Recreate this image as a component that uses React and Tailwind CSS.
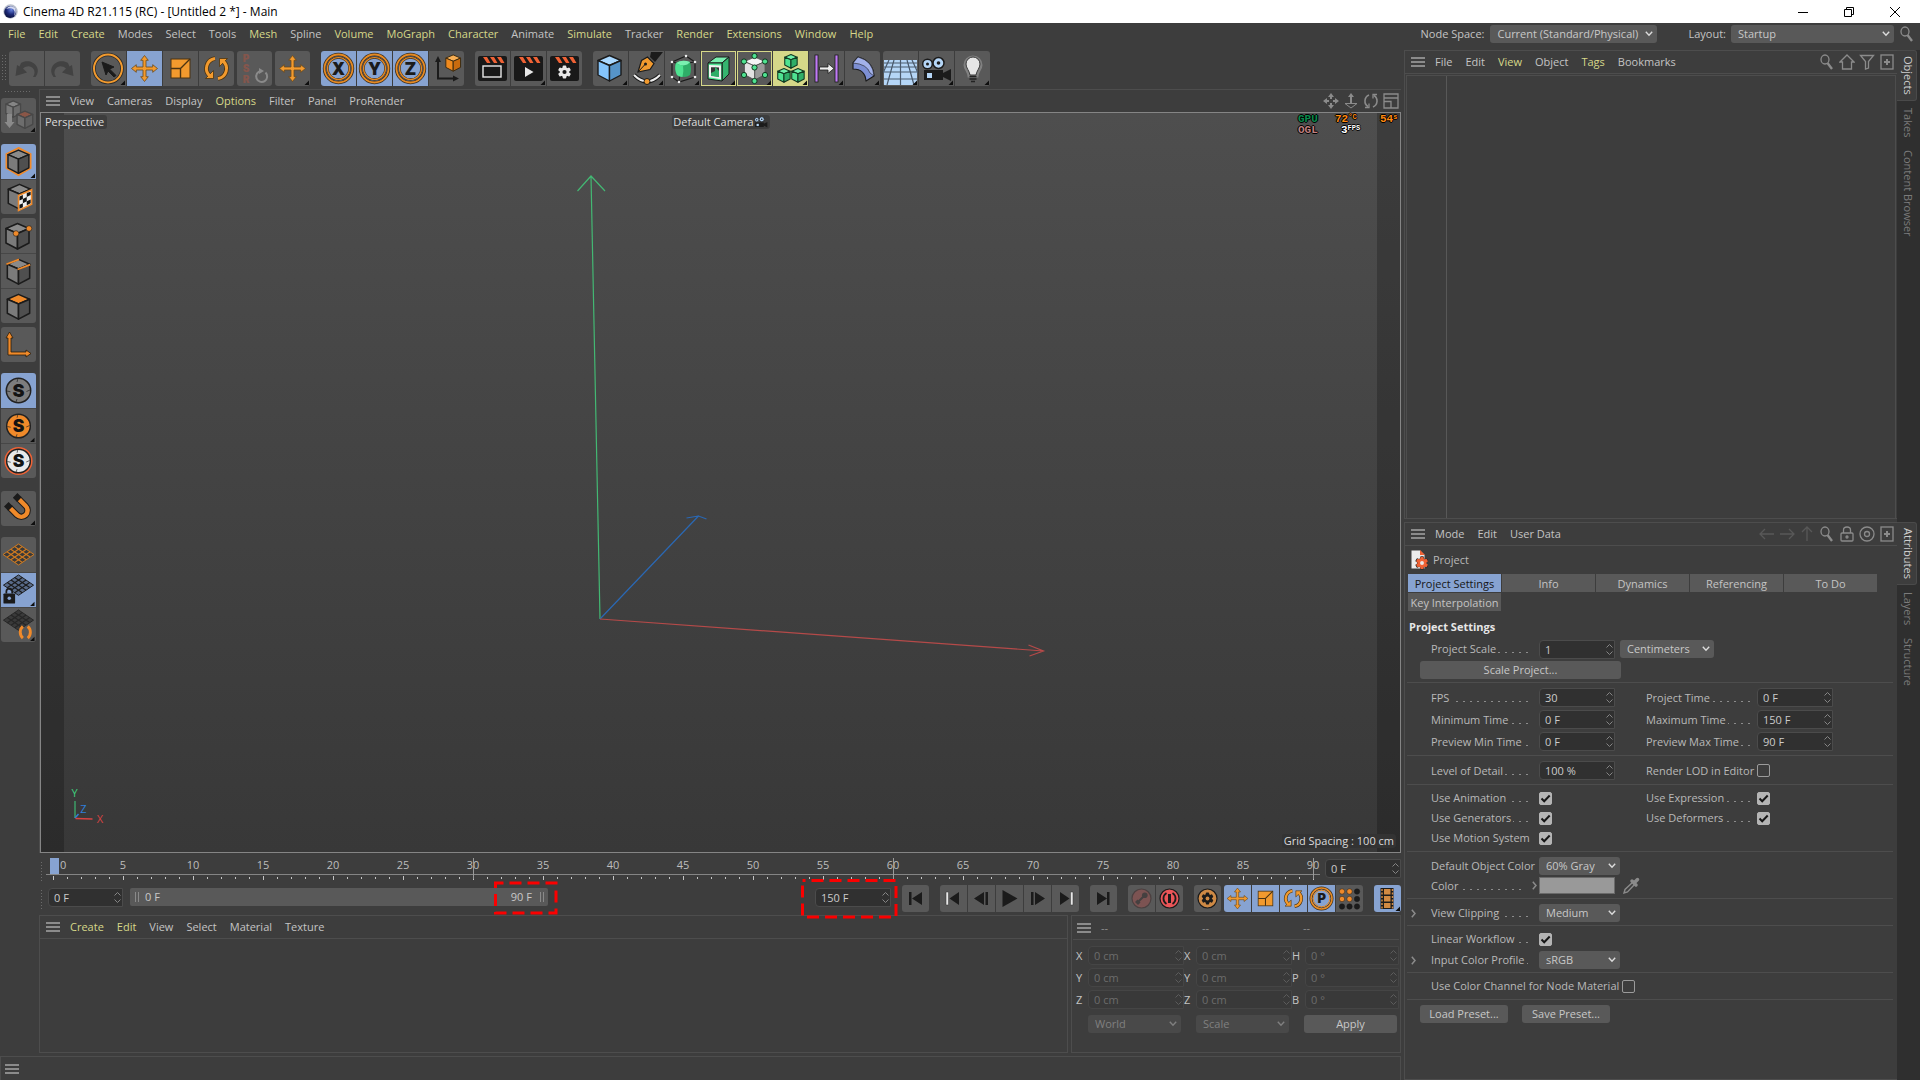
import React from "react";

const MAIN_MENU = [
  ["File", 1], ["Edit", 1], ["Create", 1], ["Modes", 0], ["Select", 0], ["Tools", 0], ["Mesh", 1], ["Spline", 0],
  ["Volume", 1], ["MoGraph", 1], ["Character", 1], ["Animate", 0], ["Simulate", 1], ["Tracker", 0], ["Render", 1],
  ["Extensions", 1], ["Window", 1], ["Help", 1],
];

const O = "#f29a2e";
const K = "#1b1b1b";

/* ---------- small parts ---------- */

function Menu({ items, className = "" }) {
  return (
    <nav className={"flex items-center gap-[13px] " + className}>
      {items.map(([t, hot]) => (
        <button key={t} className={hot ? "text-[#d6d889]" : "text-[#c4c4c4]"}>{t}</button>
      ))}
    </nav>
  );
}

function Burger() {
  return (
    <button aria-label="Panel menu" className="flex w-[14px] shrink-0 flex-col gap-0.5">
      <span className="h-0.5 bg-[#8b8b8b]" />
      <span className="h-0.5 bg-[#8b8b8b]" />
      <span className="h-0.5 bg-[#8b8b8b]" />
    </button>
  );
}

function Spin({ dim }) {
  return (
    <svg width="7" height="13" viewBox="0 0 7 13" fill="none" stroke={dim ? "#5c5c5c" : "#858585"} className="pointer-events-none absolute right-0.5 top-[3px]">
      <path d="M0.5 4.5 L3.5 1.5 L6.5 4.5 M0.5 8.5 L3.5 11.5 L6.5 8.5" />
    </svg>
  );
}

function Field({ value, id, label, dim, className = "" }) {
  return (
    <span className={"relative block h-[19px] " + className}>
      <input
        id={id}
        aria-label={label}
        defaultValue={value}
        disabled={dim}
        className={
          "block h-full w-full rounded-l-[4px] border pl-[5px] pr-3 leading-4 outline-none " +
          (dim ? "border-[#454545] bg-[#393939] text-[#6c6c6c]" : "border-[#4b4b4b] bg-[#303030] text-[#cbcbcb]")
        }
      />
      <Spin dim={dim} />
    </span>
  );
}

function Drop({ value, id, label, dim, className = "" }) {
  return (
    <span className={"relative block h-[18px] " + className}>
      <select
        id={id}
        aria-label={label}
        disabled={dim}
        className={
          "block h-full w-full appearance-none rounded-[3px] pl-[7px] pr-4 leading-4 opacity-100 outline-none " +
          (dim ? "bg-[#494949] text-[#808080]" : "bg-[#595959] text-[#c8c8c8]")
        }
      >
        <option>{value}</option>
      </select>
      <svg width="8" height="6" viewBox="0 0 8 6" fill="none" stroke={dim ? "#808080" : "#dcdcdc"} strokeWidth="1.4" className="pointer-events-none absolute right-1 top-1.5">
        <path d="M0.8 0.8 L4 4.2 L7.2 0.8" />
      </svg>
    </span>
  );
}

function Check({ id, on }) {
  return (
    <span className="relative block size-[13px]">
      <input id={id} type="checkbox" defaultChecked={on} className="block size-[13px] appearance-none rounded-[2px] border border-[#9b9b9b] checked:border-[#b4b4b4] checked:bg-[#b4b4b4]" />
      {on && (
        <svg width="13" height="13" viewBox="0 0 13 13" fill="none" stroke="#161616" strokeWidth="2" className="pointer-events-none absolute inset-0">
          <path d="M2.5 6.5 L5.2 9.2 L10.7 3.5" />
        </svg>
      )}
    </span>
  );
}

function Label({ id, children, className = "" }) {
  return (
    <label htmlFor={id} className={"flex shrink-0 items-baseline gap-0.5 whitespace-nowrap " + className}>
      {children}
      <span className="h-px min-w-0 flex-1 bg-[repeating-linear-gradient(to_left,#8c8c8c_0_2px,transparent_2px_7px)]" />
    </label>
  );
}

function Btn({ children, className = "" }) {
  return <button className={"h-[18px] rounded-[3px] bg-[#595959] leading-[18px] text-[#c8c8c8] " + className}>{children}</button>;
}

/* ---------- icons ---------- */

function Corner() {
  return <path d="M34 29.5 V34 H29.5 Z" fill="#0e0e0e" />;
}

function Ico({ children, corner }) {
  return (
    <svg viewBox="0 0 35 35" className="block size-full" fill="none">
      {children}
      {corner && <Corner />}
    </svg>
  );
}

function Cube({ t, l, r, s = K, w = 1.4, transform }) {
  return (
    <g stroke={s} strokeWidth={w} strokeLinejoin="round" transform={transform}>
      <path d="M17.5 4.5 L29 9.5 L17.5 14.5 L6 9.5 Z" fill={t} />
      <path d="M6 9.5 L17.5 14.5 V30 L6 24 Z" fill={l} />
      <path d="M29 9.5 L17.5 14.5 V30 L29 24 Z" fill={r} />
    </g>
  );
}

function GrayCube({ transform }) {
  return <Cube t="#8a8a8a" l="#7b7b7b" r="#4f4f4f" w={1.6} transform={transform} />;
}

const MOVE_PATH =
  "M17.5 4.5 L21.3 9.3 H19 V16 H25.7 V13.7 L30.5 17.5 L25.7 21.3 V19 H19 V25.7 H21.3 L17.5 30.5 L13.7 25.7 H16 V19 H9.3 V21.3 L4.5 17.5 L9.3 13.7 V16 H16 V9.3 H13.7 Z";

function MoveIcon() {
  return <path d={MOVE_PATH} fill={O} stroke="#6b4a1c" strokeWidth="0.8" />;
}

function ScaleIcon() {
  return (
    <g>
      <rect x="8" y="8" width="19" height="19" fill={O} stroke="#4a3312" strokeWidth="1" />
      <path d="M8 17.5 H17.5 V27 M17.5 17.5 L27 8" stroke="#4a3312" strokeWidth="1.4" />
    </g>
  );
}

function RotateIcon() {
  return (
    <g>
      <path d="M16 7.5 A10 10 0 0 0 11 25 M19 27.5 A10 10 0 0 0 24 10" stroke="#4a3312" strokeWidth="4.6" />
      <path d="M6.5 27.5 H14.5 V19.5 Z M28.5 7.5 H20.5 V15.5 Z" fill={O} stroke="#4a3312" strokeWidth="0.8" />
      <path d="M16 7.5 A10 10 0 0 0 11 25 M19 27.5 A10 10 0 0 0 24 10" stroke={O} strokeWidth="3" />
    </g>
  );
}

function AxisLetter({ ch }) {
  return (
    <g>
      <circle cx="17.5" cy="17.5" r="14" stroke="#3a3024" strokeWidth="3.4" />
      <circle cx="17.5" cy="17.5" r="14" stroke="#e58a24" strokeWidth="1.8" />
      <circle cx="17.5" cy="17.5" r="11" stroke="#3a3024" strokeWidth="2.4" />
      <circle cx="17.5" cy="17.5" r="11" stroke="#e58a24" strokeWidth="1.2" />
      <text x="17.5" y="23.5" textAnchor="middle" fill={K} fontSize="17" fontWeight="900" fontFamily="Inter, sans-serif">{ch}</text>
    </g>
  );
}

function Clap({ children }) {
  return (
    <g>
      <rect x="3" y="5" width="29" height="25" rx="2" fill="#191919" />
      <path d="M8 6 H12 L15.5 12 H12 Z M15 6 H19 L22.5 12 H19 Z M22 6 H26 L29.5 12 H26 Z" fill="#ef6235" />
      {children}
    </g>
  );
}

function Gear({ cx, cy, r, fill, hole }) {
  return (
    <g>
      {[0, 60, 120].map((a) => (
        <rect key={a} x={cx - r * 0.28} y={cy - r} width={r * 0.56} height={r * 2} rx={r * 0.15} fill={fill} transform={`rotate(${a} ${cx} ${cy})`} />
      ))}
      <circle cx={cx} cy={cy} r={r * 0.74} fill={fill} />
      <circle cx={cx} cy={cy} r={r * 0.32} fill={hole} />
    </g>
  );
}

const GREEN = { t: "#6ff0aa", l: "#4fe391", r: "#2fae68" };

const UNDO = "M12 12 C17 8.5 25 10 28 16 C29.5 19 29 23 26.5 26 L24 26 C26 23 26 20 24.5 18 C22 14.5 17.5 14.5 14 17.5 L18 21.5 L6.5 25 L8 14 L10.5 15.5 Z";

const TOOL = {
  undo: <path d={UNDO} fill="#424242" />,
  redo: <path d={UNDO} transform="matrix(-1 0 0 1 35 0)" fill="#424242" />,
  select: (
    <g>
      <circle cx="17" cy="17.5" r="14" stroke="#2b2b2b" strokeWidth="3.6" />
      <circle cx="17" cy="17.5" r="14" stroke={O} strokeWidth="2" />
      <path d="M11 11 L23 16 L18.5 18 L25 24.5 L23 26 L17 20 L15 24 Z" fill={K} stroke={K} />
    </g>
  ),
  move: <MoveIcon />,
  scale: <ScaleIcon />,
  rotate: <RotateIcon />,
  psr: (
    <g>
      <g fill="#85564c" fontSize="10" fontWeight="900" fontFamily="Inter, sans-serif" textAnchor="middle">
        <text x="9" y="10.5">P</text>
        <text x="9" y="21">S</text>
        <text x="9" y="31.5">R</text>
      </g>
      <path d="M24 20 A5.5 5.5 0 1 0 28.5 21.5" stroke="#8a8a8a" strokeWidth="2" />
      <path d="M22 17 L27 20 L22 23 Z" fill="#8a8a8a" />
    </g>
  ),
  x: <AxisLetter ch="X" />,
  y: <AxisLetter ch="Y" />,
  z: <AxisLetter ch="Z" />,
  coord: (
    <g>
      <path d="M9 9 V27.5 H27" stroke={K} strokeWidth="2" />
      <path d="M9 5 L12 11 H6 Z M30 27.5 L24 24.5 V30.5 Z" fill={K} />
      <Cube t="#f7ae54" l="#f08a1e" r="#c96b0e" s="#3b2a10" w={1.5} transform="translate(13 1) scale(0.64)" />
    </g>
  ),
  view: <Clap><rect x="8" y="15" width="18" height="11" stroke="#e8e8e8" strokeWidth="1.4" /></Clap>,
  viewer: <Clap><path d="M14 16 L22.5 21 L14 26 Z" fill="#e8e8e8" /></Clap>,
  settings: <Clap><Gear cx={17.5} cy={21} r={6.5} fill="#e8e8e8" hole="#191919" /></Clap>,
  cube: <Cube t="#a9d8ff" l="#84c4fb" r="#5694c9" transform="translate(-1 0)" />,
  pen: (
    <g>
      <path d="M22 1 H34 L26 11 L21 6 Z" fill={K} />
      <path d="M9 21 L12.5 9.5 L18.5 6 L25 12.5 L21 18.5 Z" fill={O} stroke={K} strokeWidth="1.2" />
      <path d="M9 21 L16 13.5" stroke={K} />
      <circle cx="16.5" cy="13" r="1.5" fill={K} />
      <path d="M5 24 Q18 37 31 24" stroke={K} strokeWidth="4" />
      <path d="M5 24 Q18 37 31 24" stroke="#eee" strokeWidth="2" />
      <circle cx="18" cy="30.5" r="3" fill={O} stroke={K} />
    </g>
  ),
  subdiv: (
    <g>
      <path d="M7 11 L21 5 L30 11 V26 L14 31 L7 26 Z M7 11 L16 13 L30 11 M16 13 L14 31" stroke={K} strokeWidth="1.2" />
      <path d="M11 12 Q17 8 25 11 Q27 18 25 24 Q20 28 12 24 Q9 18 11 12 Z" fill="#2fae68" />
      <path d="M11 12 Q17 8 25 11 Q23 14 18 14.5 Q14 14 11 12 Z" fill="#7af0b0" />
      <path d="M11 12 Q14 14 18 14.5 Q19 20 17.5 26 Q14 26 12 24 Q9 18 11 12 Z" fill="#4fe391" />
      {[[7, 11], [21, 5], [30, 11], [30, 26], [14, 31], [7, 26]].map(([a, b]) => <circle key={a + "-" + b} cx={a} cy={b} r="1.3" fill="#eee" />)}
    </g>
  ),
  boole: (
    <g stroke={K} strokeWidth="1">
      <path d="M7 12 L15 6 H28 L21 12 Z" fill="#7af0b0" />
      <path d="M21 12 L28 6 V23 L21 30 Z" fill="#35b56f" />
      <path d="M7 12 H21 V30 L7 28 Z" fill="#4fe391" />
      <path d="M9 15 L19 15.5 V27 L9 25.5 Z" fill="#353535" stroke="#f2f2f2" strokeWidth="2" />
      <path d="M14 15.5 L18 20 V26 L10 25 V22 L14 20 Z" fill="#2fae68" stroke="none" />
    </g>
  ),
  cloner: (
    <g>
      <Cube t="#f4f4f4" l="#e2e2e2" r="#9a9a9a" s="#555" w={1} transform="translate(2 2) scale(0.9)" />
      {[[17.5, 5], [7, 10.5], [28, 10.5], [17.5, 16.5], [7, 24], [28, 24], [17.5, 30]].map(([a, b]) => (
        <circle key={a + "-" + b} cx={a} cy={b} r="2.6" fill="#4fe391" stroke="#12381f" strokeWidth="1" />
      ))}
    </g>
  ),
  cubes: (
    <g>
      <Cube {...GREEN} s="#123a22" w={2} transform="translate(8.5 1) scale(0.54)" />
      <Cube {...GREEN} s="#123a22" w={2} transform="translate(1.5 15) scale(0.54)" />
      <Cube {...GREEN} s="#123a22" w={2} transform="translate(15.5 15) scale(0.54)" />
    </g>
  ),
  field: (
    <g>
      <rect x="6" y="4" width="3" height="27" fill="#c07bf5" stroke={K} strokeWidth="0.8" />
      <rect x="26" y="4" width="3" height="27" fill="#c07bf5" stroke={K} strokeWidth="0.8" />
      <path d="M10.5 16 H19 V12.5 L25 17.5 L19 22.5 V19 H10.5 Z" fill="#f0f0f0" stroke={K} strokeWidth="0.8" />
    </g>
  ),
  bend: (
    <g stroke={K} strokeWidth="1.2" strokeLinejoin="round">
      <path d="M8 12 L13 6 Q28 10 29 25 L21 30 Q20 18 8 18 Z" fill="#7d8fd4" />
      <path d="M8 12 L13 6 Q28 10 29 25 L25 22 Q22 13 8 12 Z" fill="#a3b1ea" strokeWidth="0.6" />
    </g>
  ),
  floor: (
    <g>
      <path d="M1 9 H34 V34 H1 Z" fill="#b5d6f7" />
      <path d="M1 12 H34 M1 16 H34 M1 21 H34 M1 28 H34 M17.5 9 V34 M11 9 L4 34 M24 9 L31 34 M6 9 L0 22 M29 9 L35 22" stroke="#4a5a6c" strokeWidth="1.2" />
    </g>
  ),
  camera: (
    <g>
      <circle cx="8.5" cy="13" r="4.8" fill="#b5d6f7" stroke={K} strokeWidth="1.5" />
      <circle cx="19.5" cy="12" r="5.5" fill="#b5d6f7" stroke={K} strokeWidth="1.5" />
      <circle cx="8.5" cy="13" r="1.5" fill={K} />
      <circle cx="19.5" cy="12" r="1.8" fill={K} />
      <path d="M5 19 H24 V22 L32 18 V30 L24 26 V29 H5 Z" fill={K} />
      <rect x="8" y="22" width="5" height="5" fill="#b5d6f7" />
    </g>
  ),
  light: (
    <g>
      <path d="M10 14 A8 8 0 0 1 26 14 C26 18 22.5 20 22 25 H14 C13.5 20 10 18 10 14 Z" fill="#d8d8d8" opacity="0.3" stroke="#ddd" strokeWidth="3" />
      <path d="M11 13 A7 7 0 0 1 25 13 C25 17 21.5 20 21 24 H15 C14.5 20 11 17 11 13 Z" fill="#e6e6e6" stroke="#3a3a3a" />
      <path d="M14.5 25.5 H21.5 M14.5 28 H21.5 M16 30.5 H20" stroke="#222" strokeWidth="1.5" />
    </g>
  ),
};

function Lattice({ color }) {
  return (
    <g stroke={color}>
      <path d="M17.5 7 L33 17.5 L17.5 28 L2 17.5 Z" fill="#000" fillOpacity="0.35" strokeWidth="1" />
      <path d="M13.6 9.6 L29 20 M9.8 12.2 L25.3 22.7 M6 14.8 L21.4 25.4 M21.4 9.6 L6 20.2 M25.3 12.2 L9.8 22.7 M29 14.8 L13.6 25.4" strokeWidth="1.2" />
    </g>
  );
}

const SIDE = {
  editable: (
    <g>
      <Cube t="#858585" l="#7a7a7a" r="#6c6c6c" s="#484848" w={2} transform="translate(1 0) scale(0.64)" />
      <Cube t="#8a5647" l="#6d6d6d" r="#606060" s="#484848" w={2} transform="translate(12 10) scale(0.68)" />
      <path d="M6 16 H11 V24 H13.5 L8.5 30 L3.5 24 H6 Z" fill="#8a8a8a" />
    </g>
  ),
  model: (
    <g>
      <path d="M17.5 4 L29.5 10 V24 L17.5 31 L5.5 24 V10 Z" stroke="#f08a2a" strokeWidth="2" />
      <GrayCube transform="translate(1.5 2) scale(0.91)" />
    </g>
  ),
  texture: (
    <g>
      <GrayCube transform="translate(1 0)" />
      <path d="M17.5 16 L31 10 V25 L17.5 31.5 Z" fill="#eee" stroke="#f08a2a" strokeWidth="1.6" />
      <path d="M18.5 17 L22 15.5 V19.5 L18.5 21 Z M26 13.5 L30 12 V15.5 L26 17.5 Z M22 19.5 L26 17.5 V22 L22 24 Z M18.5 25.5 L22 24 V28 L18.5 29.5 Z M26 22 L30 20 V24 L26 26 Z" fill="#141414" />
    </g>
  ),
  points: (
    <g>
      <GrayCube transform="translate(-1 1)" />
      <circle cx="15" cy="15.5" r="2.8" fill="#f08a2a" stroke={K} strokeWidth="0.6" />
      <circle cx="28" cy="10.5" r="2.8" fill="#f08a2a" stroke={K} strokeWidth="0.6" />
    </g>
  ),
  edges: (
    <g>
      <GrayCube transform="translate(0 1)" />
      <path d="M5 10.5 L18 5.5 M16.5 16 L29.5 11" stroke="#f08a2a" strokeWidth="1.8" />
    </g>
  ),
  polys: <Cube t="#f08a2a" l="#7b7b7b" r="#4f4f4f" w={1.6} transform="translate(0 1)" />,
  axis: (
    <g stroke="#2a1c0a" strokeWidth="0.8">
      <path d="M8.5 5 L12 11 H10 V25 H25 V23 L30 26.5 L25 30 V28 H7 V11 H5 Z" fill="#f08a2a" />
    </g>
  ),
};

function SIcon({ fill, ring }) {
  return (
    <g>
      {ring && <circle cx="17.5" cy="17.5" r="13.5" stroke="#ef6235" strokeWidth="2" />}
      <circle cx="17.5" cy="17.5" r="12.2" fill={fill} stroke="#222" strokeWidth="1.5" />
      <path d="M17 5.5 L16 9 M6 18 L9.5 18.8 M29 17 L25.5 18.5 M15 29 L16 26" stroke="#222" strokeWidth="0.7" />
      <text x="17.5" y="24" textAnchor="middle" fill="#131313" fontSize="18" fontWeight="900" fontFamily="Inter, sans-serif">S</text>
    </g>
  );
}

const MAGNET = (
  <g transform="translate(17.5 18) rotate(-45)">
    <path d="M-8 -7 H-2.5 V3 A3.5 3.5 0 0 0 4.5 3 V-7 H10 V3 A9 9 0 0 1 -8 3 Z" fill="#f08a2a" stroke={K} strokeWidth="1" />
    <path d="M-8.5 -12 H-2 V-6 H-8.5 Z M4 -12 H10.5 V-6 H4 Z" fill={K} />
  </g>
);

const WORKPLANE_LOCK = (
  <g>
    <g transform="translate(0 -5)"><Lattice color="#1a1a1a" /></g>
    <path d="M5 21 V19 A3 3 0 0 1 11 19 V21" stroke={K} strokeWidth="1.8" />
    <rect x="2" y="21" width="12" height="10.5" rx="1" fill={K} />
    <circle cx="8" cy="26" r="1.8" fill="#87a3d1" />
  </g>
);

const WORKPLANE_ROT = (
  <g>
    <g transform="translate(0 -5)"><Lattice color="#262626" /></g>
    <path d="M22 19 A8 8 0 0 0 22 31 M27 31 A8 8 0 0 0 27 19" stroke="#f08a2a" strokeWidth="3" />
  </g>
);

const TOOL_GROUPS = [
  ["", [["undo"], ["redo"]]],
  ["ml-[11px]", [["select", "", 1], ["move", "on"], ["scale"], ["rotate"]]],
  ["ml-[3px]", [["psr"]]],
  ["ml-[3px]", [["move", "", 1]]],
  ["ml-[11px]", [["x", "on"], ["y", "on"], ["z", "on"], ["coord"]]],
  ["ml-[11px]", [["view"], ["viewer", "", 1], ["settings"]]],
  ["ml-[11px]", [["cube", "", 1], ["pen", "", 1], ["subdiv", "", 1], ["boole", "ring", 1], ["cloner", "ring", 1], ["cubes", "hot", 1], ["field", "", 1], ["bend", "", 1]]],
  ["ml-[3px]", [["floor", "", 1], ["camera", "", 1], ["light", "", 1]]],
];

const TONE = {
  "": "bg-[#595959]",
  on: "bg-[#87a3d1]",
  hot: "bg-[#d6d889]",
  ring: "bg-[#595959] outline-1 -outline-offset-1 outline-[#d6d889]",
};

function Toolbar() {
  return (
    <div className="flex h-[43px] shrink-0 items-start pl-px pt-[5px]">
      <span className="mr-[3px] mt-[3px] h-7 w-[5px] bg-[radial-gradient(#8a8a8a_1px,transparent_1px)] bg-[size:3px_3px] opacity-60" />
      {TOOL_GROUPS.map(([gap, items], i) => (
        <div key={i} className={"flex gap-px overflow-hidden rounded-[3px] " + gap}>
          {items.map(([name, tone = "", corner], j) => (
            <button key={j} aria-label={name} className={"block size-[35px] " + TONE[tone]}>
              <Ico corner={corner}>{TOOL[name]}</Ico>
            </button>
          ))}
        </div>
      ))}
    </div>
  );
}

const PALETTE = [
  ["mt-1", [["Make Editable", SIDE.editable, "", 1]]],
  ["mt-[11px]", [["Model", SIDE.model, "on", 1], ["Texture", SIDE.texture]]],
  ["mt-1", [["Points", SIDE.points], ["Edges", SIDE.edges], ["Polygons", SIDE.polys]]],
  ["mt-1", [["Axis", SIDE.axis]]],
  ["mt-[11px]", [["Viewport Solo Off", <SIcon fill="#7d7d7d" />, "on"], ["Viewport Solo Single", <SIcon fill="#f08a2a" />, "", 1], ["Viewport Solo Hierarchy", <SIcon fill="#e9e9e9" ring />]]],
  ["mt-[13px]", [["Snap", MAGNET, "", 1]]],
  ["mt-[11px]", [["Workplane", <Lattice color="#cf7a20" />], ["Lock Workplane", WORKPLANE_LOCK, "on", 1], ["Rotate Workplane", WORKPLANE_ROT, "", 1]]],
];

function Palette() {
  return (
    <aside className="flex w-[39px] shrink-0 flex-col items-start pl-px pt-px">
      <span className="ml-[3px] h-1 w-7 bg-[radial-gradient(#8a8a8a_1px,transparent_1px)] bg-[size:3px_3px] opacity-60" />
      {PALETTE.map(([gap, items], i) => (
        <div key={i} className={"overflow-hidden rounded-[3px] " + gap}>
          {items.map(([name, icon, tone = "", corner], j) => (
            <button key={name} aria-label={name} className={"block size-[35px] " + TONE[tone] + (j ? " border-t border-[#474747]" : "")}>
              <Ico corner={corner}>{icon}</Ico>
            </button>
          ))}
        </div>
      ))}
    </aside>
  );
}

/* ---------- viewport ---------- */

function Viewport() {
  return (
    <section className="flex min-h-0 flex-1 flex-col border-l border-t border-[#4d4d4d]">
      <div className="flex h-[22px] shrink-0 items-center pl-[6px] pr-0.5">
        <Burger />
        <Menu className="ml-2.5" items={[["View"], ["Cameras"], ["Display"], ["Options", 1], ["Filter"], ["Panel"], ["ProRender"]]} />
        <div className="ml-auto flex items-center gap-1">
          <button aria-label="Pan">
            <svg width="16" height="16" viewBox="0 0 16 16" fill="#8b8b8b"><path d="M8 0 L11 4 H9 V6 H7 V4 H5 Z M8 16 L5 12 H7 V10 H9 V12 H11 Z M0 8 L4 5 V7 H6 V9 H4 V11 Z M16 8 L12 11 V9 H10 V7 H12 V5 Z" /></svg>
          </button>
          <button aria-label="Dolly">
            <svg width="16" height="16" viewBox="0 0 16 16" fill="none" stroke="#8b8b8b"><path d="M8 0 L11 4 H9 V10 H7 V4 H5 Z" fill="#8b8b8b" stroke="none" /><path d="M2 10.5 H14 L8 15 Z" /></svg>
          </button>
          <button aria-label="Orbit">
            <svg width="16" height="16" viewBox="0 0 16 16" fill="none" stroke="#8b8b8b" strokeWidth="1.6"><path d="M6 2 A6.5 6.5 0 0 0 5 13.5 M10 14 A6.5 6.5 0 0 0 11 2.5" /><path d="M2 14.5 H6 V10.5 M14 1.5 H10 V5.5" strokeWidth="1.3" /></svg>
          </button>
          <button aria-label="Toggle view">
            <svg width="16" height="16" viewBox="0 0 16 16" fill="none" stroke="#8b8b8b" strokeWidth="1.3"><path d="M1 1 H15 V15 H1 Z M1 5 H15 M1 8.5 H8 V15" /></svg>
          </button>
        </div>
      </div>
      <div className="relative min-h-0 flex-1 border border-[#858585] bg-linear-to-b from-[#4e4e4e] to-[#383838]">
        <div className="absolute inset-y-0 left-0 w-[23px] bg-black/22" />
        <div className="absolute inset-y-0 right-0 w-[23px] bg-black/22" />
        <svg viewBox="41 113 1358 739" className="absolute inset-0 size-full" fill="none">
          <path d="M599.5 619 L590.5 176 M577 191 L590.5 176 L604.5 191" stroke="#43b873" strokeWidth="1.2" />
          <path d="M599.5 619 L698 516 M686 518 L698 516 L706 519" stroke="#2a68b4" strokeWidth="1.2" />
          <path d="M599.5 619 L1043 651 M1028 645 L1043 651 L1029 656" stroke="#b54a49" strokeWidth="1.2" />
          <path d="M74.5 801 V818" stroke="#3fd07c" />
          <path d="M74.5 818 L78 814" stroke="#2f7fd8" strokeWidth="1.5" />
          <path d="M75 818.5 L92 819" stroke="#d84343" strokeWidth="1.5" />
          <g fontSize="11" fontFamily="Open Sans, sans-serif" textAnchor="middle">
            <text x="74" y="797" fill="#3fd07c">Y</text>
            <text x="83" y="813" fill="#2f7fd8">Z</text>
            <text x="99.5" y="823" fill="#d84343">X</text>
          </g>
        </svg>
        <div className="absolute left-px top-0.5 rounded-[3px] bg-[#3d3d3d] px-[3px] leading-[14px] text-[#dcdcdc]">Perspective</div>
        <div className="absolute left-1/2 top-0.5 flex -translate-x-1/2 items-center rounded-[3px] bg-[#3d3d3d] px-0.5 leading-[14px] text-[#dcdcdc]">
          Default Camera
          <svg width="14" height="12" viewBox="2 5 31 26" fill="none">{TOOL.camera}</svg>
        </div>
        <div className="absolute right-0 top-px grid grid-cols-[37px_45px_20px] font-['Liberation_Mono',monospace] text-[11px] font-bold leading-[11px] [text-shadow:1px_0_#000,-1px_0_#000,0_1px_#000,0_-1px_#000]">
          <span className="text-[#0a8a4c]">GPU</span>
          <span className="text-[#ff8a10]">72<sup className="text-[7px] leading-none">°C</sup></span>
          <span className="text-[#ff8a10]">54<sup className="text-[7px] leading-none">s</sup></span>
          <span className="text-[#c08080]">OGL</span>
          <span className="pl-[6px] text-white">3<sup className="text-[7px] leading-none">FPS</sup></span>
        </div>
        <div className="absolute bottom-1 right-1 rounded-[3px] bg-[#333333] px-0.5 leading-[14px] text-[#dcdcdc]">Grid Spacing : 100 cm</div>
      </div>
    </section>
  );
}

/* ---------- timeline ---------- */

function Ruler() {
  return (
    <div className="flex h-[31px] shrink-0 pt-[5px]">
      <span className="ml-px mt-[3px] h-5 w-1 bg-[radial-gradient(#8a8a8a_1px,transparent_1px)] bg-[size:3px_3px] opacity-60" />
      <div className="ml-0.5 flex flex-1">
        {Array.from({ length: 91 }, (_, f) => {
          const big = f % 5 === 0;
          const long = f > 0 && f % 30 === 0;
          return (
            <div key={f} className="relative flex min-w-0 flex-1 flex-col items-center">
              <div className="flex h-4 w-full justify-center">
                {f === 0 && <span className="absolute left-1 top-0 h-4 w-[9px] bg-[#87a3d1]" />}
                {big && <span className={"text-center leading-[14px] text-[#bdbdbd]" + (f === 0 ? " absolute left-[14px]" : "")}>{f}</span>}
              </div>
              <span className="h-px w-full bg-[#858585]" />
              <span className={big ? "mt-px h-1 w-px bg-[#c4c4c4]" : "mt-0.5 h-0.5 w-px bg-[#c4c4c4]"} />
              {long && <span className="absolute top-0 h-[21px] w-px bg-[#9a9a9a]" />}
            </div>
          );
        })}
      </div>
      <Field value="0 F" label="Current frame" className="ml-[5px] mt-px w-[76px]" />
    </div>
  );
}

function PB({ name, on, children, corner }) {
  return (
    <button aria-label={name} className={"block size-[27px] " + (on ? "bg-[#87a3d1]" : "bg-[#595959]")}>
      <svg viewBox="0 0 27 27" className="block size-full" fill="none">
        {children}
        {corner && <path d="M26 21.5 V26 H21.5 Z" fill="#0e0e0e" />}
      </svg>
    </button>
  );
}

function Group({ className = "", children }) {
  return <div className={"flex shrink-0 gap-px self-start overflow-hidden rounded-[3px] " + className}>{children}</div>;
}

function Transport() {
  return (
    <div className="flex h-[31px] shrink-0 pt-px">
      <span className="ml-px mt-1 h-5 w-1 bg-[radial-gradient(#8a8a8a_1px,transparent_1px)] bg-[size:3px_3px] opacity-60" />
      <Field value="0 F" label="Start frame" className="ml-1 mt-[3px] w-[75px]" />
      <div className="ml-[7px] mt-[3px] flex flex-1">
        <div className="relative flex h-[18px] w-[61%] items-center rounded-[2px] bg-[#595959] pl-[5px] pr-1 text-[#c8c8c8]">
          <span className="h-[10px] w-1 border-x border-[#8a8a8a]" />
          <span className="ml-[6px]">0 F</span>
          <span className="ml-auto mr-2">90 F</span>
          <span className="h-[10px] w-1 border-x border-[#8a8a8a]" />
          <svg width="64" height="34" viewBox="0 0 64 34" fill="none" className="pointer-events-none absolute -right-2.5 -top-[7px]">
            <path d="M1.5 2 H62 V32 H1.5 Z" stroke="#fb0000" strokeWidth="3" strokeDasharray="12 6" strokeDashoffset="4" />
          </svg>
        </div>
      </div>
      <div className="relative mr-[11px] mt-[3px] w-[76px]">
        <Field value="150 F" label="End frame" />
        <svg width="97" height="40" viewBox="0 0 97 40" fill="none" className="pointer-events-none absolute -left-[14px] -top-[9px]">
          <path d="M1.5 1.5 H95 V38 H1.5 Z" stroke="#fb0000" strokeWidth="3" strokeDasharray="12 6" strokeDashoffset="9" />
        </svg>
      </div>
      <Group>
        <PB name="Go to start"><path d="M7 7 H9.5 V20 H7 Z M20 7 V20 L10 13.5 Z" fill={K} /></PB>
      </Group>
      <Group className="ml-[11px]">
        <PB name="Previous key"><path d="M6 7 H8.5 V20 H6 Z" fill="#e8e8e8" stroke="#333" strokeWidth="0.5" /><path d="M19 7 V20 L9.5 13.5 Z" fill={K} /></PB>
        <PB name="Previous frame"><path d="M16 7 V20 L6 13.5 Z M17.5 7 H20 V20 H17.5 Z" fill={K} /></PB>
        <PB name="Play"><path d="M6.5 5 V22 L21.5 13.5 Z" fill={K} /></PB>
        <PB name="Next frame"><path d="M11 7 V20 L21 13.5 Z M7 7 H9.5 V20 H7 Z" fill={K} /></PB>
        <PB name="Next key"><path d="M8 7 V20 L17.5 13.5 Z" fill={K} /><path d="M18.5 7 H21 V20 H18.5 Z" fill="#e8e8e8" stroke="#333" strokeWidth="0.5" /></PB>
      </Group>
      <Group className="ml-[11px]">
        <PB name="Go to end"><path d="M7 7 V20 L17 13.5 Z M17 7 H19.5 V20 H17 Z" fill={K} /></PB>
      </Group>
      <Group className="ml-[11px]">
        <PB name="Record">
          <circle cx="13.5" cy="13.5" r="9.5" fill="#7c5352" stroke="#4b4040" strokeWidth="1.2" />
          <path d="M10 17 L16 11" stroke="#454040" strokeWidth="2" />
          <circle cx="16.8" cy="10.2" r="2.8" fill="#454040" />
          <path d="M9.5 14.5 L12.5 17.5 L10 20 L7 17 Z" fill="#454040" />
        </PB>
        <PB name="Autokey">
          <circle cx="13.5" cy="13.5" r="9.5" fill="#ea5558" stroke={K} strokeWidth="1.2" />
          <path d="M10.5 8 A6.5 6.5 0 0 0 10.5 19 M16.5 19 A6.5 6.5 0 0 0 16.5 8" stroke={K} strokeWidth="1.8" />
          <path d="M13.5 9 V18" stroke={K} strokeWidth="3" />
        </PB>
      </Group>
      <Group className="ml-[11px]">
        <PB name="Keyframe options"><circle cx="13.5" cy="13.5" r="9.5" fill="#cf8a45" stroke={K} strokeWidth="1.2" /><Gear cx={13.5} cy={13.5} r={6} fill={K} hole="#cf8a45" /></PB>
      </Group>
      <Group className="ml-[3px]">
        <PB name="Position" on><g transform="translate(-0.5 -0.5) scale(0.8)"><MoveIcon /></g></PB>
        <PB name="Scale" on><g transform="scale(0.771)"><ScaleIcon /></g></PB>
        <PB name="Rotation" on><g transform="scale(0.771)"><RotateIcon /></g></PB>
        <PB name="Parameter" on>
          <circle cx="13.5" cy="13.5" r="10.5" stroke="#3a3024" strokeWidth="3" />
          <circle cx="13.5" cy="13.5" r="10.5" stroke="#e58a24" strokeWidth="1.6" />
          <circle cx="13.5" cy="13.5" r="8.3" stroke="#e58a24" strokeWidth="1" />
          <text x="13.8" y="18" textAnchor="middle" fill={K} fontSize="13" fontWeight="900" fontFamily="Inter, sans-serif">P</text>
        </PB>
        <PB name="Point level">
          {[6.5, 14, 21.5].map((y, i) => [6, 13.5, 21].map((x, j) => (
            <circle key={i + "-" + j} cx={x} cy={y} r="2.7" fill={i < 2 && j < 2 ? "#f08a2a" : K} stroke={K} strokeWidth="0.5" />
          )))}
        </PB>
      </Group>
      <Group className="ml-[11px]">
        <PB name="Timeline" on corner>
          <rect x="6.5" y="3" width="13" height="21" fill={K} />
          <path d="M10 4 H16.5 V9.5 H10 Z M10 11 H16.5 V16.5 H10 Z M10 18 H16.5 V23 H10 Z" fill="#d28a42" />
          <path d="M8 4 V24 M18.5 4 V24" stroke="#d28a42" strokeWidth="1.5" strokeDasharray="2 1.5" />
        </PB>
      </Group>
    </div>
  );
}

function Coordinates() {
  const rows = [["X", "X", "H"], ["Y", "Y", "P"], ["Z", "Z", "B"]];
  return (
    <section className="w-[330px] shrink-0 border border-[#4d4d4d]">
      <div className="mx-px grid h-6 grid-cols-[24px_101px_101px_1fr] items-center border-b border-[#4d4d4d] pl-1 text-[#8f8f8f]">
        <Burger />
        <span>--</span>
        <span>--</span>
        <span>--</span>
      </div>
      <div className="mt-[6px] grid grid-cols-[12px_96px_12px_96px_13px_94px] gap-y-[3px] pl-1 text-[#c4c4c4]">
        {rows.map((r, i) =>
          r.map((l, j) => (
            <React.Fragment key={i + "-" + j}>
              <label htmlFor={"co" + i + j} className="leading-[19px]">{l}</label>
              <Field id={"co" + i + j} value={j === 2 ? "0 °" : "0 cm"} dim />
            </React.Fragment>
          ))
        )}
      </div>
      <div className="mt-[6px] grid grid-cols-[93px_93px_93px] gap-[15px] pl-4">
        <Drop value="World" label="Coordinate space" dim />
        <Drop value="Scale" label="Size mode" dim />
        <Btn>Apply</Btn>
      </div>
    </section>
  );
}

/* ---------- right side ---------- */

function G({ name, children, dim }) {
  return (
    <button aria-label={name}>
      <svg width="16" height="16" viewBox="0 0 16 16" fill="none" stroke={dim ? "#585858" : "#8b8b8b"} strokeWidth="1.3">{children}</svg>
    </button>
  );
}

const SEARCH = <g><ellipse cx="6" cy="5.5" rx="4" ry="4.5" /><path d="M8.5 9 L13 15" strokeWidth="2.4" /></g>;
const PLUS = <g><rect x="2" y="1" width="12" height="14" /><path d="M8 5 V11 M5 8 H11" strokeWidth="2" /></g>;

function SideTabs({ tabs }) {
  return (
    <div className="flex w-[23px] shrink-0 flex-col items-start bg-[#2f2f2f]">
      {tabs.map((t, i) => (
        <button
          key={t}
          className={
            "w-5 whitespace-nowrap [writing-mode:vertical-rl] " +
            (i
              ? "pl-0.5 text-[#7b7b7b] " + (i > 1 ? "pt-[13px]" : "pt-[7px]")
              : "rounded-r-[3px] border border-l-0 border-[#4a4a4a] bg-[#3d3d3d] pb-[5px] pl-0.5 pt-[5px] text-[#cfcfcf]")
          }
        >
          {t}
        </button>
      ))}
    </div>
  );
}

function Objects() {
  return (
    <div className="flex min-h-0 shrink grow-[472] basis-0">
      <section className="mb-[3px] flex flex-1 flex-col border-b border-l border-t border-[#4d4d4d]">
        <div className="flex h-[23px] shrink-0 items-center border-b border-[#4d4d4d] pl-[6px] pr-0.5">
          <Burger />
          <Menu className="ml-2.5" items={[["File"], ["Edit"], ["View", 1], ["Object"], ["Tags", 1], ["Bookmarks"]]} />
          <div className="ml-auto flex items-center gap-1">
            <G name="Search">{SEARCH}</G>
            <G name="Home"><path d="M8 1 L15 8 H12.5 V15 H3.5 V8 H1 Z" /></G>
            <G name="Filter"><path d="M1.5 1.5 H14.5 L9.5 7.5 V14 L6.5 15 V7.5 Z" /></G>
            <G name="New">{PLUS}</G>
          </div>
        </div>
        <div className="mx-px mt-px flex flex-1 border border-b-0 border-[#4d4d4d]">
          <div className="w-10 border-r border-[#585858]" />
        </div>
      </section>
      <SideTabs tabs={["Objects", "Takes", "Content Browser"]} />
    </div>
  );
}

function Sec({ className = "", children }) {
  return <div className={"ml-0.5 mr-1 flex flex-col border-b border-[#4d4d4d] pl-6 " + className}>{children}</div>;
}

function Row({ h = "h-[19px]", l, r, lc, rc, twisty, mid }) {
  return (
    <div className={"relative flex items-center " + h}>
      {twisty && (
        <svg width="5" height="9" viewBox="0 0 5 9" fill="none" stroke="#8b8b8b" strokeWidth="1.5" className="absolute -left-[20px]"><path d="M0.8 0.8 L4 4.5 L0.8 8.2" /></svg>
      )}
      <Label id={l} className={mid ? "w-[102px] pr-3" : "w-[108px] pr-[11px]"}>{l}</Label>
      {mid}
      <div className="flex w-[107px] shrink-0 items-center">{lc}</div>
      {r && <Label id={r} className="w-[111px] pr-[7px]">{r}</Label>}
      {rc}
    </div>
  );
}

function Attributes() {
  const tabs = ["Project Settings", "Info", "Dynamics", "Referencing", "To Do", "Key Interpolation"];
  return (
    <div className="flex min-h-0 grow-[558] basis-0">
      <section className="flex-1 border-b border-l border-t border-[#4d4d4d] text-[#b9b9b9]">
        <div className="flex h-[23px] items-center border-b border-[#4d4d4d] pl-[6px] pr-0.5">
          <Burger />
          <Menu className="ml-2.5" items={[["Mode"], ["Edit"], ["User Data"]]} />
          <div className="ml-auto flex items-center gap-1">
            <G name="Back" dim><path d="M15 8 H1 M6 3 L1 8 L6 13" /></G>
            <G name="Forward" dim><path d="M1 8 H15 M10 3 L15 8 L10 13" /></G>
            <G name="Up" dim><path d="M8 15 V1 M3 6 L8 1 L13 6" /></G>
            <G name="Search">{SEARCH}</G>
            <G name="Lock"><rect x="2" y="7" width="12" height="8" rx="1" /><path d="M4.5 7 V4 A3.5 3 0 0 1 11.5 4 V7" /><circle cx="8" cy="11" r="1" /></G>
            <G name="Focus"><circle cx="8" cy="8" r="7" /><circle cx="8" cy="8" r="2.5" /></G>
            <G name="New">{PLUS}</G>
          </div>
        </div>
        <div className="flex h-7 items-center gap-[5px] pl-[6px]">
          <svg width="17" height="20" viewBox="0 0 17 20" fill="none">
            <path d="M0.5 0.5 H9 L13.5 5 V18.5 H0.5 Z" fill="#ececec" />
            <path d="M9 0 L14 5 H9 Z" fill="#ef6235" />
            <Gear cx={11} cy={13} r={6.8} fill="#2a2a2a" hole="#2a2a2a" />
            <Gear cx={11} cy={13} r={6} fill="#ef6235" hole="#e8e8e8" />
          </svg>
          <span>Project</span>
        </div>
        <div className="ml-[3px] grid grid-cols-[repeat(5,93px)] gap-px">
          {tabs.map((t, i) => (
            <button key={t} className={"h-[18px] whitespace-nowrap leading-5 " + (i ? "bg-[#595959] text-[#c4c4c4]" : "bg-[#87a3d1] text-[#161616]")}>{t}</button>
          ))}
        </div>
        <h2 className="h-7 pl-1 pt-2 font-bold leading-4 text-[#e6e6e6]">Project Settings</h2>
        <Sec className="pb-[3px]">
          <Row h="h-5" l="Project Scale" lc={
            <>
              <Field id="Project Scale" value="1" className="w-[76px] shrink-0" />
              <Drop value="Centimeters" label="Unit" className="ml-[5px] w-[94px] shrink-0" />
            </>
          } />
          <Btn className="-ml-[11px] mt-0.5 w-[201px]">Scale Project...</Btn>
        </Sec>
        <Sec className="gap-[3px] pb-1 pt-[5px]">
          {[["FPS", "30", "Project Time", "0 F"], ["Minimum Time", "0 F", "Maximum Time", "150 F"], ["Preview Min Time", "0 F", "Preview Max Time", "90 F"]].map(([a, av, b, bv]) => (
            <Row key={a} l={a} lc={<Field id={a} value={av} className="w-[76px]" />} r={b} rc={<Field id={b} value={bv} className="w-[76px]" />} />
          ))}
        </Sec>
        <Sec className="pb-1 pt-[5px]">
          <Row l="Level of Detail" lc={<Field id="Level of Detail" value="100 %" className="w-[76px]" />} r="Render LOD in Editor" rc={<Check id="Render LOD in Editor" />} />
        </Sec>
        <Sec className="pb-[3px] pt-[3px]">
          <Row h="h-5" l="Use Animation" lc={<Check id="Use Animation" on />} r="Use Expression" rc={<Check id="Use Expression" on />} />
          <Row h="h-5" l="Use Generators" lc={<Check id="Use Generators" on />} r="Use Deformers" rc={<Check id="Use Deformers" on />} />
          <Row h="h-5" l="Use Motion System" lc={<Check id="Use Motion System" on />} />
        </Sec>
        <Sec className="gap-0.5 pb-1 pt-[5px]">
          <Row h="h-[18px]" l="Default Object Color" lc={<Drop id="Default Object Color" value="60% Gray" className="w-[81px]" />} />
          <Row
            h="h-[17px]"
            l="Color"
            mid={<svg width="6" height="9" viewBox="0 0 6 9" fill="none" stroke="#8b8b8b" strokeWidth="1.5" className="-ml-px mr-px"><path d="M0.8 0.8 L4 4.5 L0.8 8.2" /></svg>}
            lc={
              <>
                <button id="Color" aria-label="Color" className="h-[17px] w-[76px] shrink-0 border border-[#6a6a6a] bg-[#999999]" />
                <button aria-label="Pick color" className="ml-2">
                  <svg width="17" height="17" viewBox="0 0 17 17" fill="none" stroke="#8b8b8b" strokeWidth="1.4"><path d="M10 5 L2 12.5 L1 16 L4.5 15 L12 7" /><path d="M9 4 L13 8 M12 5 L14.5 2.5" strokeWidth="3.5" strokeLinecap="round" /></svg>
                </button>
              </>
            }
          />
        </Sec>
        <Sec className="pb-[3px] pt-[5px]">
          <Row h="h-[18px]" twisty l="View Clipping" lc={<Drop id="View Clipping" value="Medium" className="w-[81px]" />} />
        </Sec>
        <Sec className="gap-0.5 pb-[3px] pt-[3px]">
          <Row h="h-5" l="Linear Workflow" lc={<Check id="Linear Workflow" on />} />
          <Row h="h-[18px]" twisty l="Input Color Profile" lc={<Drop id="Input Color Profile" value="sRGB" className="w-[81px]" />} />
        </Sec>
        <Sec>
          <div className="flex h-[26px] items-center">
            <label htmlFor="node-material" className="w-[191px] whitespace-nowrap">Use Color Channel for Node Material</label>
            <Check id="node-material" />
          </div>
        </Sec>
        <div className="flex gap-[14px] pl-[15px] pt-[5px]">
          <Btn className="w-[88px]">Load Preset...</Btn>
          <Btn className="w-[88px]">Save Preset...</Btn>
        </div>
      </section>
      <SideTabs tabs={["Attributes", "Layers", "Structure"]} />
    </div>
  );
}

export default function App() {
  return (
    <div className="flex h-screen min-h-[1000px] w-full flex-col overflow-hidden bg-[#3d3d3d] text-[11px] leading-4 text-[#c4c4c4] [font-family:'Open_Sans','Noto_Sans',sans-serif]">
      <header className="flex h-[23px] shrink-0 items-center bg-white pl-[3px] pr-5 text-black">
        <svg width="15" height="15" viewBox="0 0 15 15">
          <defs>
            <radialGradient id="ball" cx="0.6" cy="0.3" r="0.8"><stop offset="0" stopColor="#6a86e0" /><stop offset="0.5" stopColor="#1d2a78" /><stop offset="1" stopColor="#050a2c" /></radialGradient>
          </defs>
          <circle cx="7.5" cy="7.5" r="7.2" fill="#b9bfcc" />
          <circle cx="7.2" cy="8" r="6" fill="url(#ball)" />
          <path d="M3 5 Q7 0 12 4 Q14 8 11 12 Q13 6 9 4.5 Q6 3.8 3 5 Z" fill="#eef1fb" opacity="0.85" />
        </svg>
        <h1 className="ml-[5px] text-[12px] leading-5">Cinema 4D R21.115 (RC) - [Untitled 2 *] - Main</h1>
        <div className="ml-auto flex items-center gap-9">
          <button aria-label="Minimize"><svg width="10" height="10" viewBox="0 0 10 10" stroke="#000"><path d="M0 5.5 H10" /></svg></button>
          <button aria-label="Restore"><svg width="10" height="10" viewBox="0 0 10 10" fill="none" stroke="#000"><path d="M0.5 2.5 H7.5 V9.5 H0.5 Z M2.5 2.5 V0.5 H9.5 V7.5 H7.5" /></svg></button>
          <button aria-label="Close"><svg width="10" height="10" viewBox="0 0 10 10" stroke="#000"><path d="M0 0 L10 10 M10 0 L0 10" /></svg></button>
        </div>
      </header>

      <div className="flex h-[23px] shrink-0 items-center pb-px pl-2 pr-[5px]">
        <Menu items={MAIN_MENU} />
        <div className="ml-auto flex items-center">
          <label htmlFor="node-space">Node Space:</label>
          <Drop id="node-space" value="Current (Standard/Physical)" className="ml-[6px] w-[167px]" />
          <label htmlFor="layout" className="ml-[31px]">Layout:</label>
          <Drop id="layout" value="Startup" className="ml-[5px] w-[163px]" />
          <span className="ml-[5px] flex"><G name="Search commands">{SEARCH}</G></span>
        </div>
      </div>

      <div className="flex min-h-0 flex-1">
        <main className="flex min-w-0 flex-1 flex-col">
          <Toolbar />
          <div className="flex min-h-0 flex-1">
            <Palette />
            <div className="flex min-w-0 flex-1 flex-col">
              <Viewport />
              <Ruler />
              <Transport />
              <div className="flex h-[138px] shrink-0 gap-[3px]">
                <section className="flex-1 border border-[#4d4d4d]">
                  <div className="flex h-[23px] items-center border-b border-[#4d4d4d] pl-[6px]">
                    <Burger />
                    <Menu className="ml-2.5" items={[["Create", 1], ["Edit", 1], ["View"], ["Select"], ["Material"], ["Texture"]]} />
                  </div>
                </section>
                <Coordinates />
              </div>
            </div>
          </div>
          <footer className="mt-[3px] flex h-6 shrink-0 items-center border border-b-0 border-[#4d4d4d] pl-1">
            <Burger />
          </footer>
        </main>
        <div className="ml-[3px] flex w-[516px] shrink-0 flex-col pt-1">
          <Objects />
          <Attributes />
        </div>
      </div>
    </div>
  );
}
